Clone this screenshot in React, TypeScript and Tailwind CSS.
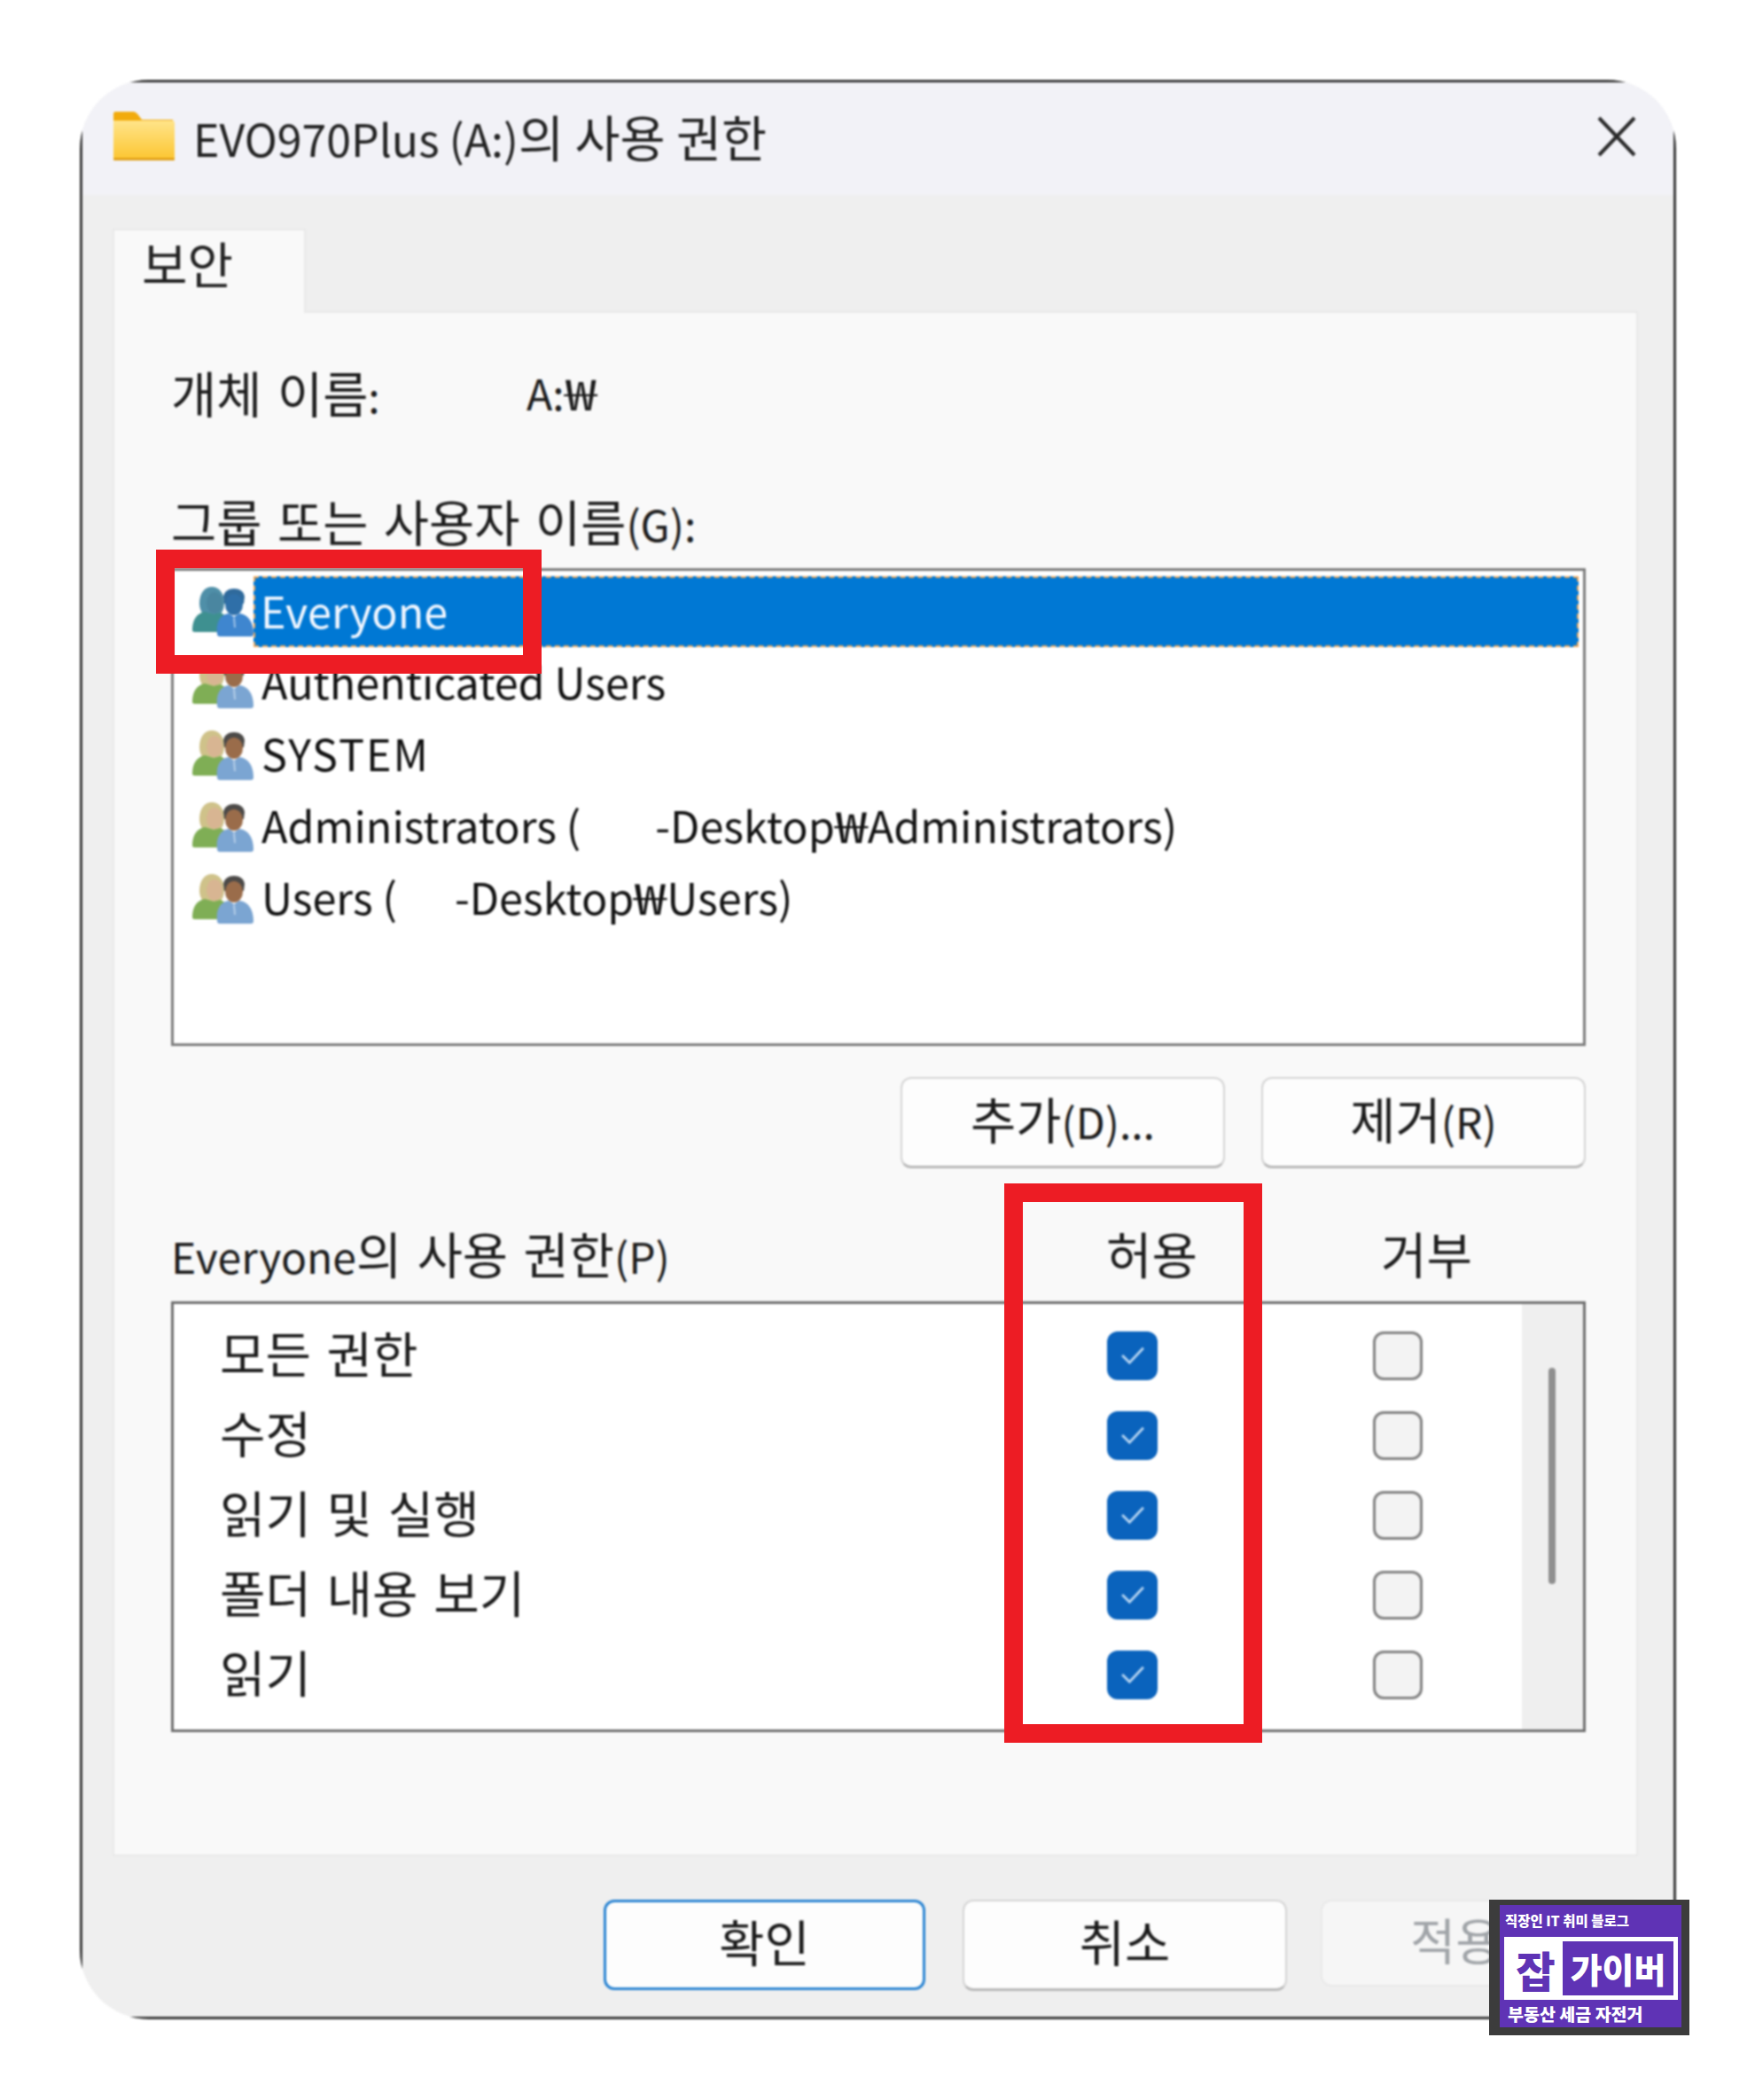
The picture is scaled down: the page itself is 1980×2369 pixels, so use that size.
import type { ReactNode } from "react";

const KR = "font-['Malgun_Gothic','Noto_Sans_CJK_KR','Noto_Sans',sans-serif]";

// hangul sits bigger than latin in the original dialog font
function K({ children }: { children: ReactNode }) {
  return <span className="text-[1.16em] font-['Noto_Sans_CJK_KR',sans-serif]">{children}</span>;
}

function Won() {
  return <span className="inline-block scale-x-[1.35] mx-[5px] font-['Noto_Sans_CJK_KR',sans-serif]">₩</span>;
}

function UsersIcon({ selected }: { selected?: boolean }) {
  const c = selected
    ? { hair: "#4f8fa8", face: "#4a86a0", body: "#3e9090", hair2: "#2f6a9c", face2: "#2f6fa8", body2: "#3f86cf" }
    : { hair: "#cfc28a", face: "#d8b592", body: "#7fae55", hair2: "#4c4a48", face2: "#9a6c4a", body2: "#7ba5d2" };
  return (
    <svg viewBox="0 0 69 57" className="w-[69px] h-[57px] shrink-0">
      <path d="M8 20C8 8 14 1 22 1s14 7 14 18c0 6-2 11-5 13H12c-2-3-4-7-4-12z" fill={c.hair} />
      <ellipse cx="25" cy="19" rx="9" ry="12" fill={c.face} />
      <path d="M0 50c0-12 5-19 14-21l10 3 8-2 6 4v18H3c-2 0-3-1-3-2z" fill={c.body} />
      <path d="M35 12c1-6 6-9 12-9s11 3 12 9l-1 8H36z" fill={c.hair2} />
      <ellipse cx="47" cy="21" rx="10" ry="12" fill={c.face2} />
      <path d="M28 54c-2-13 4-22 13-23l6 4 6-4c10 1 16 10 16 23 0 2-1 3-3 3H31c-2 0-3-1-3-3z" fill={c.body2} />
      <path d="M46 36l2-1 1 12h-2z" fill="#dbe8f5" opacity=".6" />
    </svg>
  );
}

function Folder() {
  return (
    <svg viewBox="0 0 69 55" className="w-[69px] h-[55px] shrink-0">
      <defs>
        <linearGradient id="fold" x1="0" y1="0" x2="0" y2="1">
          <stop offset="0" stopColor="#ffe48a" />
          <stop offset="1" stopColor="#fcc52f" />
        </linearGradient>
      </defs>
      <path d="M2 0h20c3 0 5 2 7 5l3 4h35v10H0V2C0 1 1 0 2 0z" fill="#f2ab0c" />
      <path d="M0 10h66c2 0 3 1 3 3v39c0 2-1 3-3 3H3c-2 0-3-1-3-3z" fill="url(#fold)" />
      <rect x="0" y="52" width="69" height="3" rx="1" fill="#e2a21a" />
    </svg>
  );
}

function WinButton({ label, tone = "normal" }: { label: ReactNode; tone?: "normal" | "primary" | "disabled" }) {
  const cls =
    tone === "primary"
      ? "border-[3px] border-[#2a84d2] bg-[#fdfdfd] text-[#1a1a1a] w-[363px] h-[102px]"
      : tone === "disabled"
        ? "border-2 border-[#e9e9e9] bg-[#f6f6f6] text-[#a0a4a8] w-[366px] h-[98px] -ml-[4px]"
        : "border-2 border-[#d5d5d5] border-b-[3px] border-b-[#b8b8b8] bg-[#fdfdfd] text-[#1a1a1a] w-[366px] h-[103px]";
  return (
    <div className={`flex items-center justify-center rounded-[12px] text-[48px] leading-none pb-[11px] ${cls}`}>
      <span>{label}</span>
    </div>
  );
}

const perms = ["모든 권한", "수정", "읽기 및 실행", "폴더 내용 보기", "읽기"];

function Row({ text, selected }: { text: ReactNode; selected?: boolean }) {
  return (
    <div className="flex items-center h-[81px] pl-[21px]">
      <UsersIcon selected={selected} />
      {selected ? (
        <div className="flex-1 h-[80px] flex items-center bg-[#0078d4] border-2 border-dashed border-[#eda75c] text-[#f2f7ff] pl-[6px] pb-[3px] mr-[5px]">
          {text}
        </div>
      ) : (
        <div className="pl-[9px] pb-[5px] text-[#111]">{text}</div>
      )}
    </div>
  );
}

export default function App() {
  return (
    <div className={`relative w-[1980px] h-[2369px] bg-white pt-[90px] pl-[90px] ${KR}`}>
      <div className="w-[1801px] h-[2188px] rounded-[78px] overflow-hidden blur-[0.8px]">
        <div className="h-full border-[3px] border-[#3a3a3a] bg-[#efefef] flex flex-col">
          {/* title bar */}
          <div className="h-[127px] bg-[#f2f2f7] flex items-center pl-[35px] pr-[42px] pb-[6px] shrink-0">
            <Folder />
            <span className="ml-[21px] text-[50px] leading-none text-[#222]">
              EVO970Plus (A:)<span className="text-[55.5px]">의 사용 권한</span>
            </span>
            <svg viewBox="0 0 44 46" className="ml-auto w-[44px] h-[46px]">
              <path d="M2 2l40 42M42 2L2 44" stroke="#2a2a2a" strokeWidth="4" fill="none" />
            </svg>
          </div>

          {/* tab */}
          <div className="mt-[38px] ml-[34px] w-[218px] h-[95px] bg-[#f9f9f9] border-2 border-b-0 border-[#e9e9e9] pl-[31px] pt-[6px] text-[56px] leading-[60px] text-[#222] relative z-10 -mb-[2px]">
            보안
          </div>

          {/* panel */}
          <div className="ml-[34px] w-[1721px] h-[1743px] bg-[#f9f9f9] border-2 border-[#e9e9e9] pl-[64px] pr-[57px] text-[48px] text-[#1c1c1c] [word-spacing:5px]">
            <div className="mt-[64px] h-[50px] flex items-center leading-none">
              <span className="w-[401px]"><K>개체 이름</K>:</span>
              <span>A:<Won /></span>
            </div>
            <div className="mt-[95px] h-[50px] flex items-center leading-none">
              <span><K>그룹 또는 사용자 이름</K>(G):</span>
            </div>

            <div className="mt-[29px] h-[539px] bg-white border-[3px] border-[#7d7d7d] pt-[5px] leading-none text-[48.5px] [word-spacing:0px]">
              <Row selected text="Everyone" />
              <Row text="Authenticated Users" />
              <Row text={<span className="tracking-[2px]">SYSTEM</span>} />
              <Row
                text={
                  <>
                    Administrators (<span className="inline-block w-[84px]" />-Desktop<Won />Administrators)
                  </>
                }
              />
              <Row
                text={
                  <>
                    Users (<span className="inline-block w-[65px]" />-Desktop<Won />Users)
                  </>
                }
              />
            </div>

            <div className="mt-[35px] flex justify-end gap-[41px]">
              <WinButton label={<><K>추가</K>(D)...</>} />
              <WinButton label={<><K>제거</K>(R)</>} />
            </div>

            <div className="mt-[70px] h-[50px] flex items-center leading-none">
              <span className="w-[1055px]">Everyone<K>의 사용 권한</K>(P)</span>
              <span className="w-[310px] text-[56px]">허용</span>
              <span className="text-[56px]">거부</span>
            </div>

            <div className="mt-[30px] h-[486px] bg-white border-[3px] border-[#6f6f6f] flex">
              <div className="flex-1 pt-[13px]">
                {perms.map((p) => (
                  <div key={p} className="h-[90px] flex items-center leading-none">
                    <span className="pl-[52px] pb-[9px] w-[1053px] text-[56px]">{p}</span>
                    <span className="w-[57px] h-[55px] rounded-[12px] bg-[#0a63bd] flex items-center justify-center">
                      <svg viewBox="0 0 32 24" className="w-[30px] h-[22px]">
                        <path d="M3 12l9 9L29 3" stroke="#b9d6f2" strokeWidth="3" fill="none" />
                      </svg>
                    </span>
                    <span className="ml-[243px] w-[56px] h-[55px] rounded-[12px] bg-[#f3f3f3] border-[3px] border-[#828282]" />
                  </div>
                ))}
              </div>
              <div className="w-[69px] bg-[#efefef] pt-[72px] pl-[30px]">
                <div className="w-[8px] h-[244px] rounded-full bg-[#8f8f8f]" />
              </div>
            </div>
          </div>

          {/* dialog buttons */}
          <div className="mt-[49px] flex justify-end gap-[42px] pr-[32px]">
            <WinButton label={<K>확인</K>} tone="primary" />
            <WinButton label={<K>취소</K>} />
            <WinButton label={<><K>적용</K>(A)</>} tone="disabled" />
          </div>
        </div>
      </div>

      {/* red highlight boxes */}
      <div className="absolute left-[176px] top-[620px] w-[435px] h-[140px] border-[21px] border-[#ed1c24] blur-[0.4px]" />
      <div className="absolute left-[1133px] top-[1335px] w-[291px] h-[631px] border-[21px] border-[#ed1c24] blur-[0.4px]" />

      {/* watermark badge */}
      <div className="absolute left-[1680px] top-[2143px] w-[226px] h-[153px] bg-[#3c3c3c] pt-[6px] pb-[9px] pl-[12px] pr-[9px]">
        <div className="h-full bg-[#5f33b5] flex flex-col text-white font-bold">
          <div className="h-[36px] pl-[6px] flex items-center text-[15.5px] leading-none font-black">직장인 IT 취미 블로그</div>
          <div className="ml-[5px] mr-[4px] h-[71px] bg-white p-[5px] flex items-center">
            <span className="w-[61px] text-center text-[#5f33b5] text-[48px] font-black leading-none">잡</span>
            <span className="flex-1 h-[61px] bg-[#5f33b5] flex items-center justify-center text-[39px] font-black leading-none">가이버</span>
          </div>
          <div className="flex-1 pl-[9px] flex items-center text-[19.5px] leading-none font-black">부동산 세금 자전거</div>
        </div>
      </div>
    </div>
  );
}
